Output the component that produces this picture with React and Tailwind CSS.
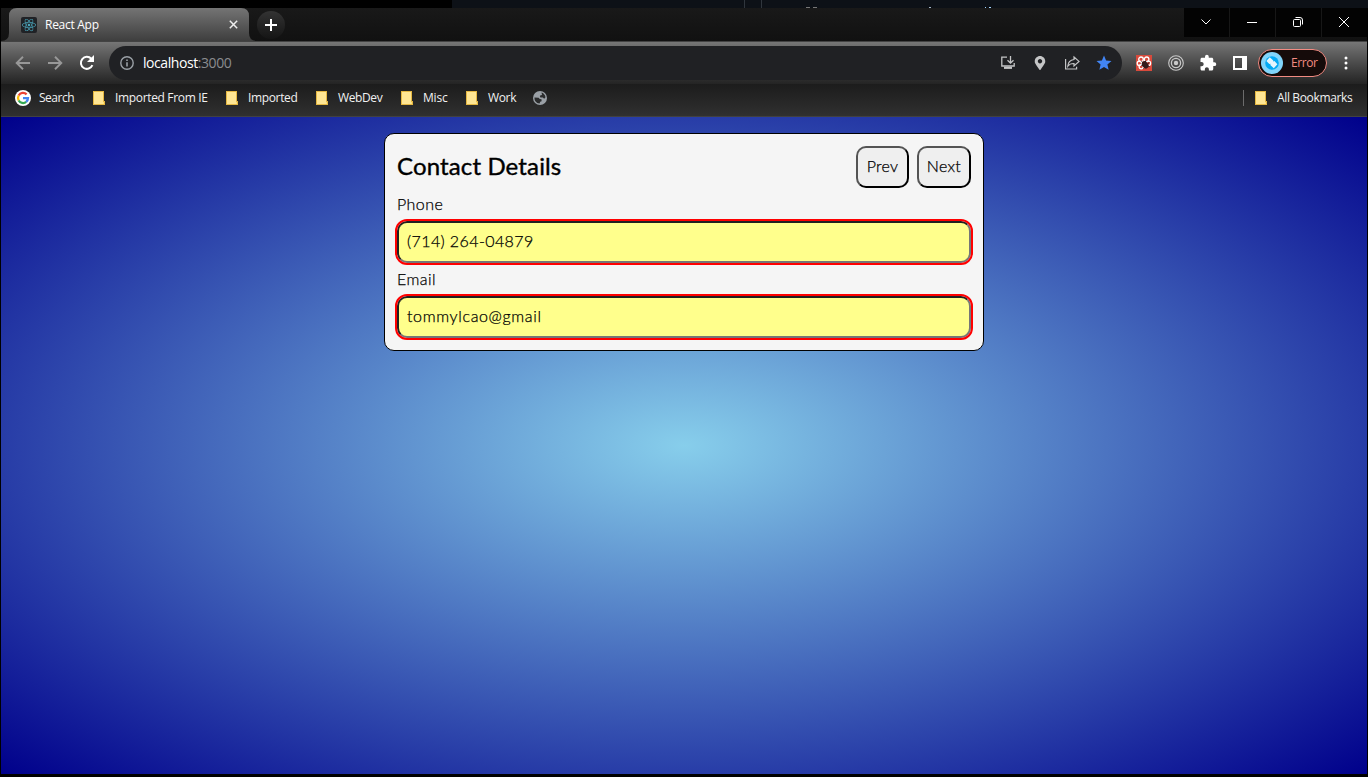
import { FaReact, FaMapMarkerAlt } from "react-icons/fa";
import { MdExtension, MdStar } from "react-icons/md";

const ui = "whitespace-nowrap font-['Open_Sans','Noto_Sans',sans-serif]";

function Folder() {
  return (
    <svg width="12" height="14" viewBox="0 0 12 14" shapeRendering="crispEdges">
      <path d="M0 0h11v10h1v4H0z" fill="#e5b843" />
      <path d="M1 1h9v12H1z" fill="#ffe694" />
      <path d="M10 11h1v2h-1z" fill="#ffe07a" />
    </svg>
  );
}

function Google() {
  return (
    <svg width="16" height="16" viewBox="0 0 16 16">
      <circle cx="8" cy="8" r="8" fill="#fff" />
      <g fill="none" strokeWidth="2.3">
        <path d="M11.6 4.4A5 5 0 0 0 3.7 5.5" stroke="#ea4335" />
        <path d="M3.7 5.5a5 5 0 0 0 0 5" stroke="#fbbc05" />
        <path d="M3.7 10.5a5 5 0 0 0 7.5 1.4" stroke="#34a853" />
        <path d="M11.2 11.9A5 5 0 0 0 13 8.1H8" stroke="#4285f4" />
      </g>
    </svg>
  );
}

function TabBar() {
  return (
    <div className="flex h-[33px] bg-linear-to-b from-[#191919] to-[#111]">
      <svg width="256" height="33" viewBox="0 0 256 33" className="absolute">
        <defs>
          <linearGradient id="tab" x1="0" y1="0" x2="0" y2="1">
            <stop offset="0" stopColor="#747474" />
            <stop offset="1" stopColor="#3e3e3e" />
          </linearGradient>
        </defs>
        <path d="M0 33Q8 33 8 25V8Q8 0 16 0H240Q248 0 248 8V25Q248 33 256 33Z" fill="url(#tab)" />
      </svg>
      <div className="relative flex w-[248px] items-center pl-5">
        <div className="flex size-4 items-center justify-center rounded-[2px] bg-[#202226]">
          <FaReact size={14} color="#4ba5bb" />
        </div>
        <span className={`ml-2 w-[176px] text-[12px] tracking-[-0.28px] text-white ${ui}`}>React App</span>
        <svg className="ml-2" width="9" height="9" viewBox="0 0 9 9" stroke="#eee" strokeWidth="1.5">
          <path d="M.8.8l7.4 7.4M8.2.8L.8 8.2" />
        </svg>
      </div>
      <div className="relative ml-2 mt-[3px] flex size-7 items-center justify-center rounded-full bg-linear-to-b from-[#333] to-[#151515]">
        <svg width="12" height="12" viewBox="0 0 12 12" stroke="#fff" strokeWidth="2"><path d="M6 0v12M0 6h12" /></svg>
      </div>
      <div className="ml-auto flex h-[29px] gap-px bg-[#171717] text-white">
        <div className="flex w-[45px] items-center justify-center bg-[#030303] pr-px pb-px">
          <svg width="10" height="6" viewBox="0 0 10 6" fill="none" stroke="currentColor"><path d="M.5.5L5 5 9.5.5" /></svg>
        </div>
        <div className="flex w-[45px] items-center justify-center bg-[#030303] pr-px">
          <div className="h-px w-2.5 bg-white" />
        </div>
        <div className="flex w-[45px] items-center justify-center bg-[#030303] pr-px pb-px">
          <svg width="10" height="10" viewBox="0 0 10 10" fill="none" stroke="currentColor">
            <rect x=".5" y="2.5" width="7" height="7" rx="1" /><path d="M2.5.5H7a2.5 2.5 0 0 1 2.5 2.5v4.5" />
          </svg>
        </div>
        <div className="flex w-[45px] items-center justify-center bg-[#030303] pr-px pb-px">
          <svg width="10" height="10" viewBox="0 0 10 10" stroke="currentColor"><path d="M0 0l10 10M10 0L0 10" /></svg>
        </div>
      </div>
    </div>
  );
}

function Toolbar() {
  return (
    <div className="flex h-[42px] items-center bg-linear-to-b from-[#767676] to-[#242424] pl-3.5">
      <svg width="16" height="14" viewBox="0 0 16 14" fill="none" stroke="#989898" strokeWidth="1.9"><path d="M15 7H2M8 .8L1.7 7 8 13.2" /></svg>
      <svg className="ml-4" width="16" height="14" viewBox="0 0 16 14" fill="none" stroke="#989898" strokeWidth="1.9"><path d="M1 7h13M8 .8L14.3 7 8 13.2" /></svg>
      <svg className="ml-4" width="16" height="16" viewBox="0 0 16 16">
        <path d="M13.4 10.2A6 6 0 1 1 12.3 3.8" fill="none" stroke="#fff" strokeWidth="2" />
        <path d="M15 0v7H8z" fill="#fff" />
      </svg>
      <div className="ml-3.5 flex h-[34px] w-[1013px] items-center rounded-full bg-[#202124] pl-[11px]">
        <svg width="14" height="14" viewBox="0 0 14 14">
          <circle cx="7" cy="7" r="6.2" fill="none" stroke="#9aa0a6" strokeWidth="1.4" />
          <path d="M6.2 6.2h1.6v4.3H6.2zM6.2 3.4h1.6V5H6.2z" fill="#9aa0a6" />
        </svg>
        <span className={`ml-[9px] pb-px text-[14px] tracking-[-0.43px] text-white ${ui}`}>localhost<span className="text-[#8a8c8f]">:3000</span></span>
        <div className="ml-auto flex items-center pr-[9px] text-[#c4c5c6]">
          <svg width="16" height="16" viewBox="0 0 16 16" fill="none" stroke="currentColor" strokeWidth="1.3">
            <path d="M7 2.2H1.8V11H14.2V8M10.5 1v7M7.5 5.2l3 3 3-3" /><path d="M4 12.8h8" strokeWidth="2.2" />
          </svg>
          <div className="ml-4 flex w-4 justify-center"><FaMapMarkerAlt size={14} color="#c4c5c6" /></div>
          <svg className="ml-4" width="16" height="16" viewBox="0 0 16 16" fill="none" stroke="currentColor" strokeWidth="1.2">
            <path d="M1.6 4v10h11v-2.2M10 2l5 4.4-5 4.5V8.5C7 8.4 5.1 9.4 3.8 11.2 4 7.6 6.1 5 10 4.5z" />
          </svg>
          <MdStar className="ml-[15px]" size={18} color="#4285f4" />
        </div>
      </div>
      <svg className="ml-3.5" width="16" height="16" viewBox="0 0 16 16">
        <path d="M0 0h16v16H0z" fill="#d84a3c" />
        <g fill="none" stroke="#fff" strokeWidth="1.3">
          <circle cx="5" cy="4.3" r="2.3" /><circle cx="10.6" cy="4.3" r="2.3" /><circle cx="3.4" cy="8.3" r="2.2" /><circle cx="12.4" cy="8.3" r="2.2" /><circle cx="5.2" cy="11.8" r="2.1" />
        </g>
        <ellipse cx="9.2" cy="10" rx="3" ry="3.9" fill="#351c1c" transform="rotate(-35 9 10)" />
        <path d="M5.5 6.5l2 1.5M9.5 5.5v2M12 8.5l1.5-1M12 11l1.6.6M5.5 10.5h2M7.5 13.5l1-1" stroke="#351c1c" />
      </svg>
      <svg className="ml-4" width="16" height="16" viewBox="0 0 16 16" fill="none" stroke="#c9c9c9">
        <circle cx="8" cy="8" r="7.3" strokeWidth="1.1" /><circle cx="8" cy="8" r="4.6" strokeWidth="1.3" /><circle cx="8" cy="8" r="2.2" fill="#c9c9c9" stroke="none" />
      </svg>
      <MdExtension className="ml-[15px]" size={18} color="#fff" />
      <svg className="ml-4" width="14" height="14" viewBox="0 0 14 14"><path fill="#fff" fillRule="evenodd" d="M0 0h14v14H0zM2 2v10h7V2z" /></svg>
      <div className="ml-[11px] flex h-7 w-[69px] items-center rounded-full border border-[#f28b82] bg-[#150b0a] pl-[2px]">
        <svg width="22" height="22" viewBox="0 0 22 22">
          <circle cx="11" cy="11" r="11" fill="#81d4fa" /><circle cx="11" cy="11" r="6.8" fill="#03a9f4" />
          <path d="M8.7 5.2l3.6 3.2-.3 1 1.4-.3 3 3.2-3.6 3.9-3.5-3.3.3-1.2-1.3.2-2.9-2.8z" fill="#e5f5fd" />
        </svg>
        <span className={`ml-2 text-[12px] tracking-[-0.4px] text-[#f28b82] ${ui}`}>Error</span>
      </div>
      <svg className="ml-[17px]" width="4" height="14" viewBox="0 0 4 14" fill="#fff"><circle cx="2" cy="2" r="1.5" /><circle cx="2" cy="7" r="1.5" /><circle cx="2" cy="12" r="1.5" /></svg>
    </div>
  );
}

function Bookmarks() {
  return (
    <div className={`flex h-8 items-center bg-linear-to-b from-[#1c1c1c] to-[#303030] pb-1 pl-3.5 text-[12px] text-[#f1f1f1] ${ui}`}>
      <Google />
      <span className="ml-2 w-[54px] tracking-[-0.5px]">Search</span>
      <Folder />
      <span className="ml-2.5 w-[111px] tracking-[-0.34px]">Imported From IE</span>
      <Folder />
      <span className="ml-2.5 w-[68px] tracking-[-0.35px]">Imported</span>
      <Folder />
      <span className="ml-2.5 w-[63px] tracking-[-0.38px]">WebDev</span>
      <Folder />
      <span className="ml-2.5 w-[43px] tracking-[-0.2px]">Misc</span>
      <Folder />
      <span className="ml-2.5 w-[45px] tracking-[-0.35px]">Work</span>
      <svg width="14" height="14" viewBox="0 0 14 14">
        <circle cx="7" cy="7" r="7" fill="#9aa0a6" />
        <path d="M1.5 6.5l4.2.3 1 1.3 1.8.2.1 2-1.4.4-.6 1.9C3.2 12.3 1.2 9.5 1.5 6.5zM8.5 1.6c2 .5 3.7 2.3 4 4.6l-1.3 1.5-1.4-1.1-2.4-.2-.6-1.5.9-.7 1.3-.3z" fill="#2b2c2d" />
      </svg>
      <div className="ml-auto mr-[11px] h-4 w-px bg-[#6c6c6c]" />
      <Folder />
      <span className="ml-2.5 w-[90px] tracking-[-0.36px]">All Bookmarks</span>
    </div>
  );
}

function Field({ label, value, spacing }) {
  return (
    <label className="block font-['Lato',sans-serif] text-[16px] font-light text-black [-webkit-text-stroke:0.25px_black]">
      <span className="flex h-[33px] items-center pb-0.5 tracking-[0.45px]">{label}</span>
      <input
        defaultValue={value}
        className={`block h-[42px] w-full rounded-[10px] border-2 border-[#767676] bg-[#ffff8c] px-2 pb-[3px] outline-2 outline-[red] [border-style:inset] ${spacing}`}
      />
    </label>
  );
}

function NavButton({ children, size }) {
  return (
    <button className={`h-[42px] rounded-[10px] border-2 border-black bg-[#efefef] pb-0.5 text-[16px] font-light tracking-[0.3px] text-black [-webkit-text-stroke:0.25px_black] [border-style:outset] ${size}`}>
      {children}
    </button>
  );
}

export default function App() {
  return (
    <div className="flex h-[777px] w-[1368px] flex-col overflow-hidden bg-black">
      <div className="flex h-2 overflow-hidden">
        <div className="w-[452px] bg-black" />
        <div className="flex flex-1 items-end bg-[#0d1117]">
          <div className="ml-[292px] h-2 w-px bg-[#30363d]" />
          <div className="ml-4 h-2 w-px bg-[#30363d]" />
          <div className="ml-11 h-px w-1 bg-[#777]" />
          <div className="ml-[3px] h-px w-1 bg-[#777]" />
          <div className="ml-[112px] h-px w-[2px] bg-[#a5b6c8]" />
          <div className="ml-[54px] h-px w-px bg-[#a5d6ff]" />
          <div className="ml-[3px] h-px w-[2px] bg-[#a5d6ff]" />
        </div>
      </div>
      <div className="ml-px w-[1366px]">
        <TabBar />
        <div className="h-px bg-[#434343]" />
        <Toolbar />
        <Bookmarks />
        <div className="h-px bg-[#414141]" />
      </div>
      <main className="ml-px h-[657px] w-[1366px] bg-[radial-gradient(skyblue,darkblue)] pt-4">
        <form className="mx-auto h-[218px] w-[600px] rounded-[10px] border border-black bg-[#f5f5f5] p-3 font-['Lato',sans-serif]">
          <div className="flex h-[42px] items-center gap-2">
            <h1 className="mr-auto pb-0.5 text-[24px] font-normal tracking-[0.13px] text-black [-webkit-text-stroke:0.4px_black]">Contact Details</h1>
            <NavButton size="w-[53px]">Prev</NavButton>
            <NavButton size="w-[54px]">Next</NavButton>
          </div>
          <Field label="Phone" value="(714) 264-04879" spacing="tracking-[0.4px]" />
          <Field label="Email" value="tommylcao@gmail" spacing="tracking-[0.65px]" />
        </form>
      </main>
    </div>
  );
}
